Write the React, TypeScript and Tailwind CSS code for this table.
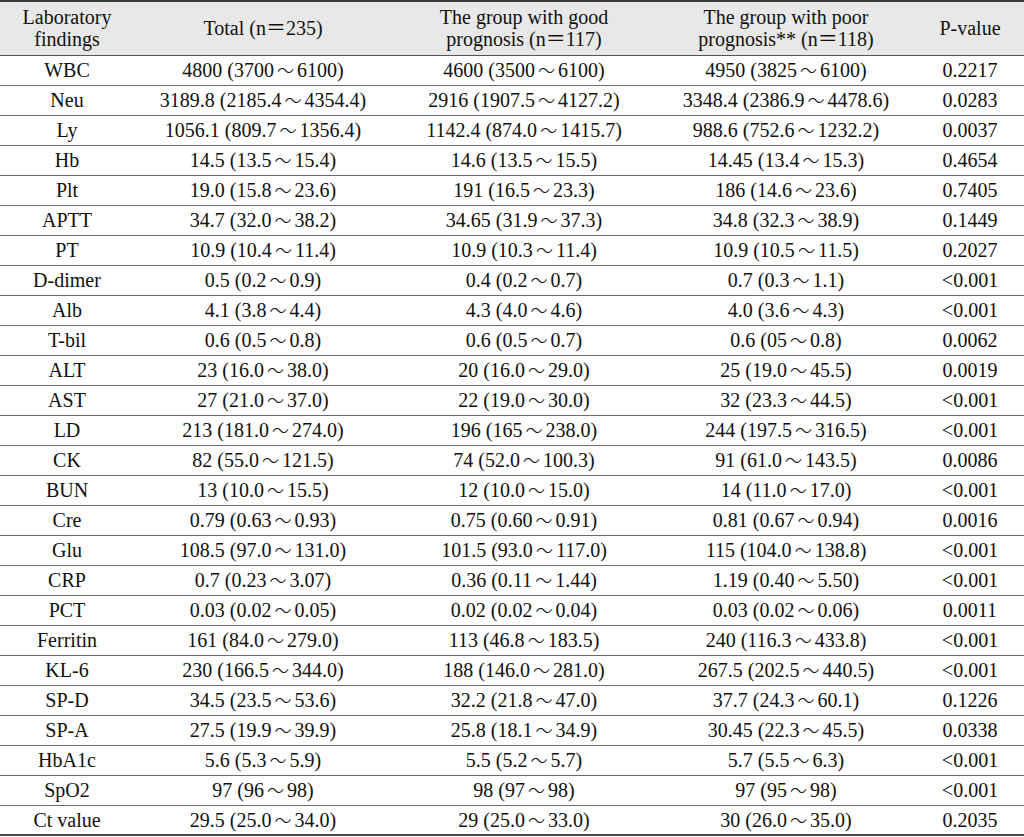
type Row = [string, string, string, string, string];

const rows: Row[] = [
  ["WBC", "4800 (3700～6100)", "4600 (3500～6100)", "4950 (3825～6100)", "0.2217"],
  ["Neu", "3189.8 (2185.4～4354.4)", "2916 (1907.5～4127.2)", "3348.4 (2386.9～4478.6)", "0.0283"],
  ["Ly", "1056.1 (809.7～1356.4)", "1142.4 (874.0～1415.7)", "988.6 (752.6～1232.2)", "0.0037"],
  ["Hb", "14.5 (13.5～15.4)", "14.6 (13.5～15.5)", "14.45 (13.4～15.3)", "0.4654"],
  ["Plt", "19.0 (15.8～23.6)", "191 (16.5～23.3)", "186 (14.6～23.6)", "0.7405"],
  ["APTT", "34.7 (32.0～38.2)", "34.65 (31.9～37.3)", "34.8 (32.3～38.9)", "0.1449"],
  ["PT", "10.9 (10.4～11.4)", "10.9 (10.3～11.4)", "10.9 (10.5～11.5)", "0.2027"],
  ["D-dimer", "0.5 (0.2～0.9)", "0.4 (0.2～0.7)", "0.7 (0.3～1.1)", "<0.001"],
  ["Alb", "4.1 (3.8～4.4)", "4.3 (4.0～4.6)", "4.0 (3.6～4.3)", "<0.001"],
  ["T-bil", "0.6 (0.5～0.8)", "0.6 (0.5～0.7)", "0.6 (05～0.8)", "0.0062"],
  ["ALT", "23 (16.0～38.0)", "20 (16.0～29.0)", "25 (19.0～45.5)", "0.0019"],
  ["AST", "27 (21.0～37.0)", "22 (19.0～30.0)", "32 (23.3～44.5)", "<0.001"],
  ["LD", "213 (181.0～274.0)", "196 (165～238.0)", "244 (197.5～316.5)", "<0.001"],
  ["CK", "82 (55.0～121.5)", "74 (52.0～100.3)", "91 (61.0～143.5)", "0.0086"],
  ["BUN", "13 (10.0～15.5)", "12 (10.0～15.0)", "14 (11.0～17.0)", "<0.001"],
  ["Cre", "0.79 (0.63～0.93)", "0.75 (0.60～0.91)", "0.81 (0.67～0.94)", "0.0016"],
  ["Glu", "108.5 (97.0～131.0)", "101.5 (93.0～117.0)", "115 (104.0～138.8)", "<0.001"],
  ["CRP", "0.7 (0.23～3.07)", "0.36 (0.11～1.44)", "1.19 (0.40～5.50)", "<0.001"],
  ["PCT", "0.03 (0.02～0.05)", "0.02 (0.02～0.04)", "0.03 (0.02～0.06)", "0.0011"],
  ["Ferritin", "161 (84.0～279.0)", "113 (46.8～183.5)", "240 (116.3～433.8)", "<0.001"],
  ["KL-6", "230 (166.5～344.0)", "188 (146.0～281.0)", "267.5 (202.5～440.5)", "<0.001"],
  ["SP-D", "34.5 (23.5～53.6)", "32.2 (21.8～47.0)", "37.7 (24.3～60.1)", "0.1226"],
  ["SP-A", "27.5 (19.9～39.9)", "25.8 (18.1～34.9)", "30.45 (22.3～45.5)", "0.0338"],
  ["HbA1c", "5.6 (5.3～5.9)", "5.5 (5.2～5.7)", "5.7 (5.5～6.3)", "<0.001"],
  ["SpO2", "97 (96～98)", "98 (97～98)", "97 (95～98)", "<0.001"],
  ["Ct value", "29.5 (25.0～34.0)", "29 (25.0～33.0)", "30 (26.0～35.0)", "0.2035"],
];

// range text: the wave dash sits in its own span with a little air round it
function Range({ text }: { text: string }) {
  const parts = text.split("～");
  if (parts.length < 2) return <>{text}</>;
  return (
    <>
      {parts[0]}
      <span className="mx-[3px] inline-block w-[17px] text-center font-['Noto_Sans_CJK_JP'] text-[17px] font-light">～</span>
      {parts[1]}
    </>
  );
}

export default function App() {
  return (
    <div className="min-h-screen bg-white font-['Liberation_Serif','Noto_Sans_CJK_JP',serif] text-[20px] text-[#111]">
      <table className="w-[1024px] table-fixed border-collapse">
        <colgroup>
          <col className="w-[134px]" />
          <col className="w-[258px]" />
          <col className="w-[264px]" />
          <col className="w-[260px]" />
          <col className="w-[108px]" />
        </colgroup>
        <thead>
          <tr className="h-[54px] border-t-2 border-b border-t-[#3c3c3c] border-b-[#555] bg-[#e8e8e8] text-center leading-[22px]">
            <th className="font-normal">
              Laboratory
              <br />
              findings
            </th>
            <th className="font-normal">Total (n＝235)</th>
            <th className="font-normal">
              The group with good
              <br />
              prognosis (n＝117)
            </th>
            <th className="font-normal">
              The group with poor
              <br />
              prognosis** (n＝118)
            </th>
            <th className="font-normal">P-value</th>
          </tr>
        </thead>
        <tbody>
          {rows.map((r) => (
            <tr key={r[0]} className="h-[30px] border-b border-[#6c6c6c] text-center leading-none last:border-b-2 last:border-[#4a4a4a]">
              <td>{r[0]}</td>
              <td>
                <Range text={r[1]} />
              </td>
              <td>
                <Range text={r[2]} />
              </td>
              <td>
                <Range text={r[3]} />
              </td>
              <td>{r[4]}</td>
            </tr>
          ))}
        </tbody>
      </table>
    </div>
  );
}
